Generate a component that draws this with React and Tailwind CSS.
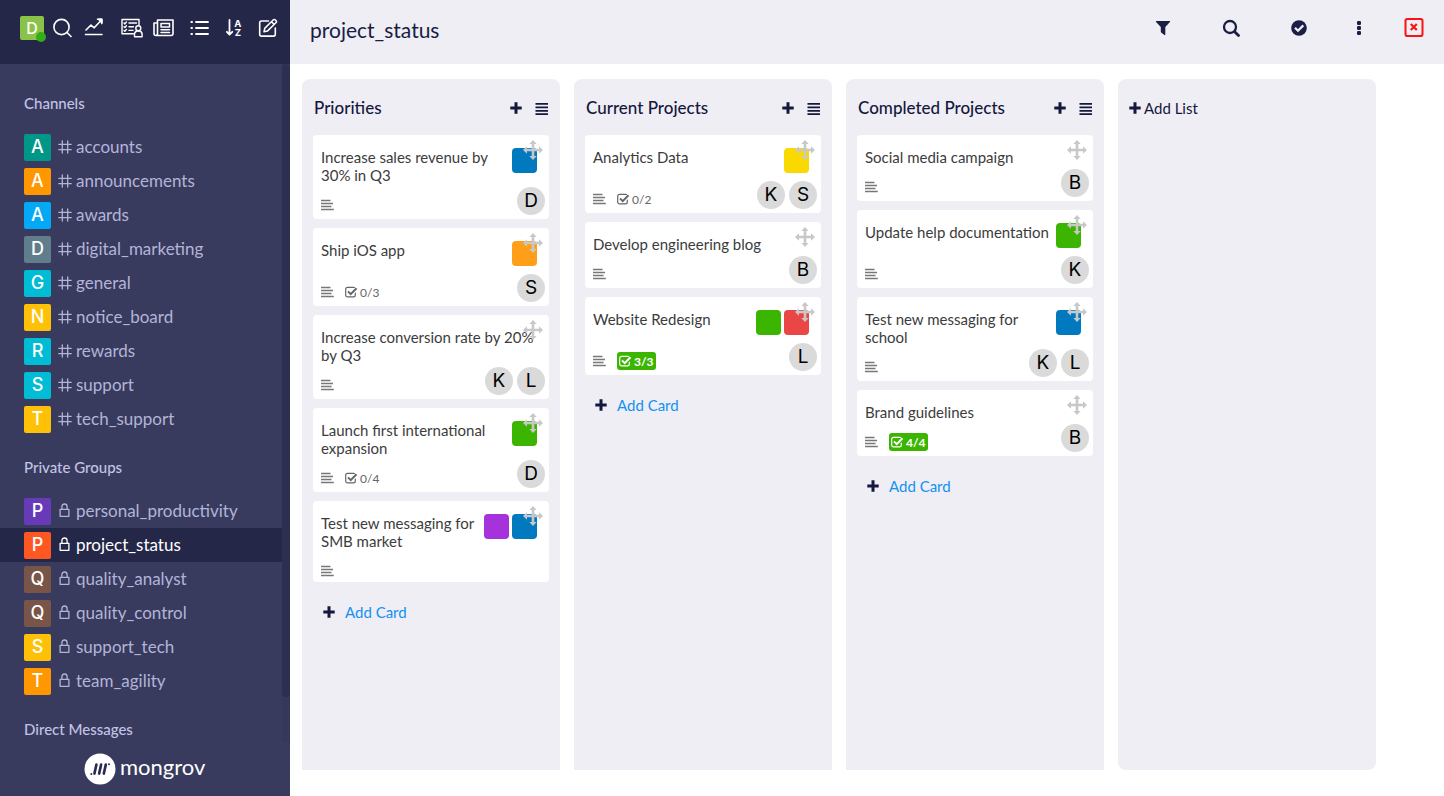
import React from "react";

const channels = [
  ["accounts", "bg-[#009688]"],
  ["announcements", "bg-[#ff9800]"],
  ["awards", "bg-[#03a9f4]"],
  ["digital_marketing", "bg-[#607d8b]"],
  ["general", "bg-[#00bcd4]"],
  ["notice_board", "bg-[#ffc107]"],
  ["rewards", "bg-[#00bcd4]"],
  ["support", "bg-[#00bcd4]"],
  ["tech_support", "bg-[#ffc107]"],
];

const groups = [
  ["personal_productivity", "bg-[#673ab7]"],
  ["project_status", "bg-[#ff5722]"],
  ["quality_analyst", "bg-[#795548]"],
  ["quality_control", "bg-[#795548]"],
  ["support_tech", "bg-[#ffc107]"],
  ["team_agility", "bg-[#ff9800]"],
];

const BLUE = "bg-[#0079bf]";
const GREEN = "bg-[#3cb500]";

const lists = [
  {
    title: "Priorities",
    cards: [
      { title: "Increase sales revenue by 30% in Q3", labels: [BLUE], people: ["D"] },
      { title: "Ship iOS app", labels: ["bg-[#ff9f19]"], people: ["S"], checks: "0/3" },
      { title: "Increase conversion rate by 20% by Q3", labels: [], people: ["K", "L"] },
      { title: "Launch first international expansion", labels: [GREEN], people: ["D"], checks: "0/4" },
      { title: "Test new messaging for SMB market", labels: ["bg-[#a632db]", BLUE], people: [] },
    ],
  },
  {
    title: "Current Projects",
    cards: [
      { title: "Analytics Data", labels: ["bg-[#fad900]"], people: ["K", "S"], checks: "0/2" },
      { title: "Develop engineering blog", labels: [], people: ["B"] },
      { title: "Website Redesign", labels: [GREEN, "bg-[#eb4646]"], people: ["L"], checks: "3/3", done: true },
    ],
  },
  {
    title: "Completed Projects",
    cards: [
      { title: "Social media campaign", labels: [], people: ["B"] },
      { title: "Update help documentation", labels: [GREEN], people: ["K"] },
      { title: "Test new messaging for school", labels: [BLUE], people: ["K", "L"] },
      { title: "Brand guidelines", labels: [], people: ["B"], checks: "4/4", done: true },
    ],
  },
];

const line = {
  fill: "none",
  stroke: "currentColor",
  strokeWidth: 1.6,
  strokeLinecap: "round",
  strokeLinejoin: "round",
  "aria-hidden": true,
};

const SearchThin = () => (
  <svg width="20" height="20" viewBox="0 0 20 20" {...line}>
    <circle cx="9.5" cy="9" r="7.6" />
    <path d="M15 14.5 19 18.5" />
  </svg>
);
const Chart = () => (
  <svg width="20" height="20" viewBox="0 0 20 20" {...line}>
    <path d="M2 12 7 7l3.200 2.800L17 2.500M13.500 1.300h4.300v4.300M1.500 16.500h16.500" />
    <path d="M14.500 1.300h3.300v3.300z" fill="currentColor" />
  </svg>
);
const Board = () => (
  <svg width="24" height="20" viewBox="0 0 24 20" {...line} strokeWidth="1.4">
    <path d="M13.5 15.8H2V1.5h17v5.3" />
    <path d="m4 5 .9.9L6.4 4M4 8.7l.9.9 1.5-1.9M4 12.4l.9.9 1.5-1.9M9 5h7.5M9 8.7h4.5M9 12.4h4" />
    <circle cx="18.3" cy="10.2" r="2.5" />
    <path d="M14.5 18.800v-2.600c0-1.600 1-2.700 2.500-3.200h2.600c1.500.5 2.500 1.600 2.500 3.200v2.600z" />
  </svg>
);
const News = () => (
  <svg width="22" height="20" viewBox="0 0 22 20" {...line}>
    <path d="M5.500 5H2v10.500c0 1.200.8 2 1.900 2H19c1.200 0 2-.8 2-2V2H5.500v13.400c0 1.200-.7 2.100-1.700 2.100" />
    <path d="M9 5.500h8.500v3.500H9zM9 11.800h8.500M9 14.500h8.500" strokeWidth="1.5" />
  </svg>
);
const Bullets = () => (
  <svg width="20" height="20" viewBox="0 0 20 20" {...line}>
    <path d="M6 4h12M6 10h12M6 16h12M1.300 4h.8M1.300 10h.8M1.300 16h.8" strokeWidth="1.8" />
  </svg>
);
const SortAZ = () => (
  <svg width="18" height="20" viewBox="0 0 18 20" {...line}>
    <path d="M3.500 2v14.500M.900 13.800 3.500 16.700l2.800-2.900" strokeWidth="1.8" />
    <g fill="currentColor" stroke="none" fontFamily="Inter, sans-serif" fontWeight="700" fontSize="9.5">
      <text x="8.3" y="9">A</text>
      <text x="8.7" y="17.7">Z</text>
    </g>
  </svg>
);
const Compose = () => (
  <svg width="20" height="20" viewBox="0 0 20 20" {...line}>
    <path d="M10.500 3H3.500C2.500 3 1.700 3.800 1.700 4.800v11.500c0 1 .8 1.800 1.800 1.800h12c1 0 1.800-.8 1.800-1.800V10" />
    <path d="M6 13.800 6.700 10.400 15.400 1.800c.5-.5 1.200-.5 1.700 0l1 1c.5.5.5 1.200 0 1.700L9.400 13.100zM13.500 3.700l2.700 2.700" strokeWidth="1.5" />
  </svg>
);
const Hash = () => (
  <svg width="14" height="14" viewBox="0 0 14 14" {...line} strokeWidth="1.3">
    <path d="M4.300 1v12M9.700 1v12M.8 4.300h12.400M.8 9.700h12.400" />
  </svg>
);
const Lock = () => (
  <svg width="14" height="16" viewBox="0 0 14 16" {...line} strokeWidth="1.3">
    <path d="M2.100 6.300h8.800v7H2.100zM3.900 6.300V3.700C3.900 2.100 5 1 6.500 1s2.600 1.100 2.600 2.700v2.600" />
  </svg>
);
const Funnel = () => (
  <svg width="16" height="16" viewBox="0 0 16 16" fill="currentColor" aria-hidden="true">
    <path d="M1.500 1h13c.6 0 .9.700.4 1.100L10.300 7v7.600c0 .500-.5.700-.9.400L6.200 12.400C5.900 12.200 5.800 12 5.800 11.700V7L1.100 2.100C.6 1.700.9 1 1.500 1z" />
  </svg>
);
const SearchBold = () => (
  <svg width="18" height="18" viewBox="0 0 18 18" {...line} strokeWidth="2.3">
    <circle cx="8" cy="8" r="6" />
    <path d="m12.700 12.700 3.800 3.800" strokeWidth="2.8" />
  </svg>
);
const CheckCircle = () => (
  <svg width="16" height="16" viewBox="0 0 16 16" aria-hidden="true">
    <circle cx="8" cy="8" r="7.8" fill="currentColor" />
    <path d="m4 7.700 3 3 5.300-5.300" fill="none" stroke="#efeef5" strokeWidth="2.3" />
  </svg>
);
const Dots = () => (
  <svg width="6" height="16" viewBox="0 0 6 16" fill="currentColor" aria-hidden="true">
    <rect x="1" y="1" width="4" height="4" rx="1.2" />
    <rect x="1" y="6" width="4" height="4" rx="1.2" />
    <rect x="1" y="11" width="4" height="4" rx="1.2" />
  </svg>
);
const CloseBox = () => (
  <svg width="20" height="20" viewBox="0 0 20 20" {...line}>
    <rect x="1.5" y="1" width="17" height="17" rx="1.8" strokeWidth="2" />
    <path d="m6.800 6 6 6M12.800 6l-6 6" strokeWidth="2.2" strokeLinecap="butt" />
  </svg>
);
const Plus = () => (
  <svg width="12" height="12" viewBox="0 0 12 12" {...line} strokeWidth="3" strokeLinecap="butt">
    <path d="M6 .3v11.400M.3 6h11.400" />
  </svg>
);
const Lines = () => (
  <svg width="14" height="14" viewBox="0 0 14 14" {...line} strokeWidth="1.7" strokeLinecap="butt">
    <path d="M.5 2.900h12.500M.5 6.400h12.500M.5 9.900h12.500M.5 13.100h12.500" />
  </svg>
);
const Description = () => (
  <svg width="14" height="12" viewBox="0 0 14 12" {...line} strokeWidth="1.6" strokeLinecap="butt">
    <path d="M0 1.500h9.500M0 4.500h12M0 7.500h10.500M0 10.500h12.800" />
  </svg>
);
const CheckBox = () => (
  <svg width="13" height="12" viewBox="0 0 13 12" {...line} strokeWidth="1.2">
    <path d="M10.300 7v2c0 1.100-.8 1.900-1.900 1.900H2.600C1.500 10.900.7 10.100.7 9V3.200c0-1.100.8-1.900 1.900-1.900h5.800c.4 0 .7.1 1 .2" />
    <path d="m3 5.400 2.700 2.700 5.800-5.900" strokeWidth="2" strokeLinecap="butt" strokeLinejoin="miter" />
  </svg>
);
const Move = () => (
  <svg width="20" height="20" viewBox="0 0 20 20" fill="currentColor" aria-hidden="true">
    <path d="m10 0 3.700 4h-2.400v4.700H16V6.300l4 3.700-4 3.700v-2.400h-4.700V16h2.400L10 20l-3.700-4h2.400v-4.700H4v2.400L0 10l4-3.700v2.400h4.700V4H6.300z" />
  </svg>
);
const Logo = () => (
  <svg width="32" height="32" viewBox="0 0 32 32" aria-hidden="true">
    <circle cx="16" cy="16" r="15.5" fill="#fff" />
    <g stroke="#292c50" strokeWidth="2.6" strokeLinecap="round">
      <path d="m10.400 20.600 2-9M15.100 20.600l2-9M19.800 20.600l2-9" />
    </g>
    <circle cx="7.300" cy="20.900" r="1" fill="#292c50" />
    <circle cx="25" cy="11.200" r="1" fill="#292c50" />
  </svg>
);

function Section({ title, items, Icon, active }) {
  return (
    <section className="mb-[21px]">
      <h2 className="mb-[17px] pl-6 text-[15px] leading-5 font-medium text-[#c3c3e6]">{title}</h2>
      <ul>
        {items.map(([name, color]) => (
          <li key={name}>
            <a
              href={"#" + name}
              className={
                "flex h-[34px] items-center pl-6 text-[17px] " +
                (name === active ? "bg-[#242748] text-white" : "text-[#b3b4d8]")
              }
            >
              <span className={"flex size-[27px] items-center justify-center rounded-xs font-['Inter',sans-serif] text-lg font-medium text-white " + color}>
                {name[0].toUpperCase()}
              </span>
              <span className="mr-1 ml-[7px]"><Icon /></span>
              <span className="pb-px">{name}</span>
            </a>
          </li>
        ))}
      </ul>
    </section>
  );
}

function Card({ card }) {
  return (
    <li className="relative rounded bg-white pt-[13px] pl-2">
      <div className="flex justify-between pr-3">
        <h3 className="text-[15px] leading-[18px] text-[#3c3c3c]">{card.title}</h3>
        {card.labels.length > 0 && (
          <div className="mb-[5px] flex shrink-0 gap-[3px]">
            {card.labels.map((color) => (
              <span key={color} className={"size-[25px] rounded " + color} />
            ))}
          </div>
        )}
      </div>
      <div className="mt-[3px] flex min-h-[29px] items-start pr-1">
        <div className="-mb-2 flex h-9 items-center text-[#777]">
          <Description />
          {card.checks && (
            <span
              className={
                "ml-2.5 flex h-[18px] items-center gap-0.5 rounded-[3px] " +
                (card.done ? "bg-[#3cb500] px-0.5 font-bold text-white" : "text-[#666]")
              }
            >
              <CheckBox />
              <span className="pt-0.5 text-xs leading-4">{card.checks}</span>
            </span>
          )}
        </div>
        <div className="ml-auto flex gap-1">
          {card.people.map((p) => (
            <span key={p} className="mb-1 flex size-7 items-center justify-center rounded-full bg-[#dadada] font-['Inter',sans-serif] text-[19px] text-black">
              {p}
            </span>
          ))}
        </div>
      </div>
      <button aria-label="Move card" className="absolute top-[5px] right-1.5 text-[#c8c8c8]"><Move /></button>
    </li>
  );
}

function List({ list }) {
  return (
    <section className="w-[258px] shrink-0 rounded-t-lg bg-[#efeef5] px-[11px] text-[#15173d]">
      <div className="flex h-14 items-center pt-0.5 pl-px">
        <h2 className="text-[17px] font-medium">{list.title}</h2>
        <button aria-label="Add card to list" className="ml-auto"><Plus /></button>
        <button aria-label="List menu" className="ml-[13px]"><Lines /></button>
      </div>
      <ul className="flex flex-col gap-[9px]">
        {list.cards.map((c) => <Card key={c.title} card={c} />)}
      </ul>
      <button className="mt-5 flex h-5 items-center gap-2.5 pl-2.5">
        <Plus />
        <span className="text-[15px] text-[#1291f2]">Add Card</span>
      </button>
    </section>
  );
}

export default function App() {
  const tool = "shrink-0";
  return (
    <div className="flex min-h-screen bg-white font-['Lato',sans-serif]">
      <aside className="flex w-[290px] shrink-0 flex-col bg-[#383b5e]">
        <div className="flex h-16 items-center bg-[#242748] pb-2 pl-5 text-white">
          <button aria-label="Profile" className="relative flex size-6 items-center justify-center rounded-xs bg-[#8bc34a] font-['Inter',sans-serif] text-base font-medium">
            D
            <span className="absolute -right-0.5 -bottom-0.5 size-2.5 rounded-full bg-[#35ac19]" />
          </button>
          <button aria-label="Search" className={tool + " ml-2"}><SearchThin /></button>
          <button aria-label="Analytics" className={tool + " ml-3"}><Chart /></button>
          <button aria-label="Boards" className={tool + " ml-4"}><Board /></button>
          <button aria-label="News" className={tool + " ml-2"}><News /></button>
          <button aria-label="Directory" className={tool + " ml-4"}><Bullets /></button>
          <button aria-label="Sort" className={tool + " ml-4"}><SortAZ /></button>
          <button aria-label="Create new" className={tool + " ml-3.5"}><Compose /></button>
        </div>
        <div className="flex grow">
          <nav className="grow pt-[29px]">
            <Section title="Channels" items={channels} Icon={Hash} />
            <Section title="Private Groups" items={groups} Icon={Lock} active="project_status" />
            <h2 className="pl-6 text-[15px] leading-5 font-medium text-[#c3c3e6]">Direct Messages</h2>
          </nav>
          <div className="w-2 bg-[#353859]">
            <div className="h-[633px] rounded bg-[#2c2f4f]" />
          </div>
        </div>
        <div className="flex h-[54px] items-center pl-[84px] text-white">
          <Logo />
          <span className="ml-1 pb-1 text-[22px] leading-7">mongrov</span>
        </div>
      </aside>

      <main className="flex min-w-0 grow flex-col">
        <header className="flex h-16 items-center bg-[#efeef5] px-5 pb-2 text-[#1a1d44]">
          <h1 className="mr-auto pt-1 text-[21px]">project_status</h1>
          <button aria-label="Filter" className="flex w-5 justify-center"><Funnel /></button>
          <button aria-label="Search cards" className="ml-12 flex w-5 justify-center"><SearchBold /></button>
          <button aria-label="Select" className="ml-12 flex w-5 justify-center"><CheckCircle /></button>
          <button aria-label="More" className="ml-10 flex w-5 justify-center"><Dots /></button>
          <button aria-label="Close board" className="ml-[35px] text-[#fb1212]"><CloseBox /></button>
        </header>
        <div className="flex grow gap-3.5 overflow-x-auto pt-[15px] pb-[26px] pl-3">
          {lists.map((l) => <List key={l.title} list={l} />)}
          <section className="w-[258px] shrink-0 rounded-lg bg-[#efeef5] px-[11px] text-[#15173d]">
            <button className="flex h-14 items-center gap-[3px] pt-0.5 text-[15px]"><Plus />Add List</button>
          </section>
        </div>
      </main>
    </div>
  );
}
